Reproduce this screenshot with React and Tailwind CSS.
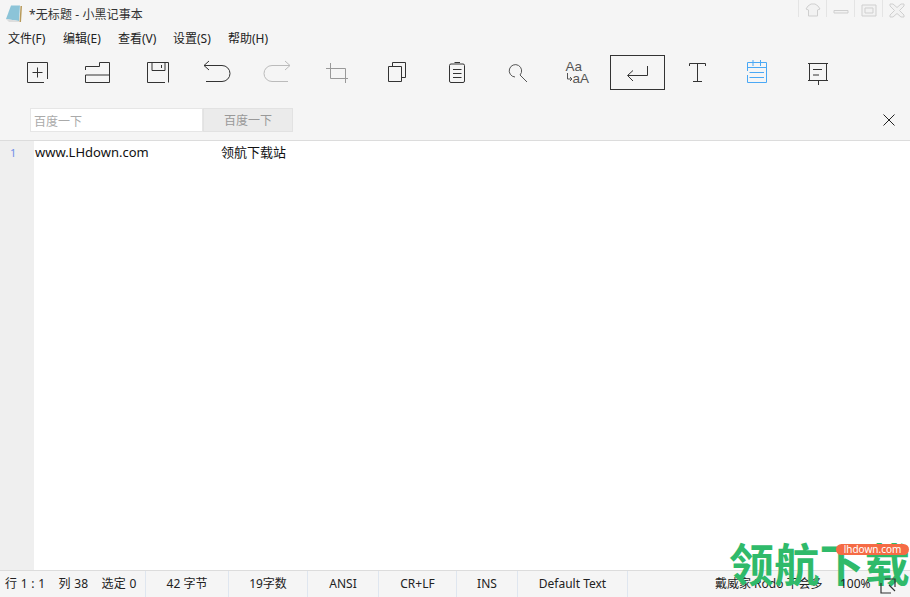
const dark = '#333333';

function Icon({ i, children, stroke = dark }) {
  // paths below use page coordinates, the viewBox shifts them into the button
  const x = 8 + 60 * i;
  return (
    <svg width="60" height="36" viewBox={`${x} 55 60 36`} fill="none" stroke={stroke} strokeWidth="1" className="block">
      {children}
    </svg>
  );
}

const tools = [
  <path key="n" d="M47.5 79V62.5H27.5V82.5H44M37.5 67.5V77.5M32.5 72.5H42.5" />,
  <path key="o" d="M85.5 70V66.5H99.5V62.5H109.5V82.5H85.5V75H109.5" />,
  <path key="s" d="M165 82.5H147.5V62.5H168.5V82.5M152 62.5V70.5H165V62.5M161.5 65V68" />,
  <path key="u" d="M206 81.5H222A8 8 0 0 0 222 65.5H204L209 61M204 65.5L209 70" />,
  <path key="r" d="M288 81.5H272A8 8 0 0 1 272 65.5H290L285 61M290 65.5L285 70" />,
  <path key="c" d="M326 68.5H345.5V83M330.5 63V78.5H348" />,
  <path key="d" d="M392.5 66V62.5H405.5V77.5H401.5M388.5 66.5H401.5V81.5H388.5Z" />,
  <path key="p" d="M451 64H463A1.5 1.5 0 0 1 464.500 65.500V81A1.500 1.500 0 0 1 463 82.500H451A1.500 1.500 0 0 1 449.500 81V65.500A1.500 1.500 0 0 1 451 64ZM454.500 62.500H460M453 69.500H461.500M453 73.500H461.500M453 77.500H461.500" />,
  <path key="f" d="M520 75A6.200 6.200 0 1 0 515 77M520 75L527 82" />,
  null,
  <path key="e" d="M647.500 66V75.500H628M633 70.500L627.500 75.500L633 81" />,
  <path key="t" d="M689.500 66V63.500H705.500V66M697.500 63.500V81.500M693 81.500H702" />,
  <path key="b" d="M747.500 71V62.500H766.500V82.500H747.500V75M747.500 67.500H766.500M753 60V66M760.500 60V66M749.500 72.500H764M749.500 77.500H764" />,
  <path key="m" d="M808 63.500H828M809.500 63.500V80M826.500 63.500V80M808 80.500H828M818.500 80.500V85M813 69.500H822M813 75H819" />,
];

function CaseIcon() {
  return (
    <Icon i={9} stroke="#555555">
      <text x="565.500" y="71" fontFamily="Liberation Sans, sans-serif" fontSize="13.500" fill="#555555" stroke="none">Aa</text>
      <text x="572.500" y="83" fontFamily="Liberation Sans, sans-serif" fontSize="13.500" fill="#555555" stroke="none">aA</text>
      <path d="M567.500 73V79H572M570 77L572 79L570 81" />
    </Icon>
  );
}

const statusCells = [
  { w: 'w-[83px]', text: '42 字节' },
  { w: 'w-[79px]', text: '19字数' },
  { w: 'w-[71px]', text: 'ANSI' },
  { w: 'w-[78px]', text: 'CR+LF' },
  { w: 'w-[61px]', text: 'INS' },
  { w: 'w-[110px]', text: 'Default Text' },
];

export default function App() {
  const colours = { 3: dark, 4: '#bbbbbb', 5: '#999999', 8: '#555555', 12: '#4aa8f5' };

  return (
    <div className="relative w-[910px] h-[597px] overflow-hidden flex flex-col bg-[#f5f5f5] text-[12px] leading-none text-[#222] font-['Noto_Sans','Noto_Sans_CJK_SC',sans-serif]">
      {/* Title bar */}
      <div className="h-[28px] flex items-start shrink-0">
        <svg width="18" height="18" viewBox="0 0 18 18" className="ml-[6px] mt-[5px] shrink-0">
          <path d="M0 14L5 0.500L14 0.500L13 16Z" fill="#8cc4d8" />
          <path d="M14.500 1L16 1L15 17L13.500 17Z" fill="#b89a5a" />
          <path d="M0 14L13 16L13 17L3 17Z" fill="#dddddd" />
        </svg>
        <span className="ml-[5px] mt-[9px] text-[12px] tracking-[0.1px] text-[#333]">*无标题 - 小黑记事本</span>
        <div className="ml-auto flex h-[17px]">
          {[
            <path key="s" d="M3 4L6 2H10L13 4L15 7L12.500 8V14H3.500V8L1 7Z" />,
            <path key="m" d="M1 8.500H15V11H1Z" />,
            <path key="r" d="M1 3H15V14H1ZM4 6H12V11H4Z" />,
            <path key="c" d="M1 2L4 2L8 5.500L12 2H15V4L10.500 8.500L15 13V15H12L8 11.500L4 15H1V13L5.500 8.500L1 4Z" />,
          ].map((d, i) => (
            <div key={i} className="w-[28px] border-l border-[#e4e4e4] flex items-center justify-center pt-[2px]">
              <svg width="16" height="16" viewBox="0 0 16 16" fill="#f2f2f2" stroke="#cfcfcf" strokeWidth="1">{d}</svg>
            </div>
          ))}
        </div>
      </div>

      {/* Menu */}
      <div className="h-[20px] flex items-center pl-[8px] pt-[2px] shrink-0 text-[#222]">
        {['文件(F)', '编辑(E)', '查看(V)', '设置(S)', '帮助(H)'].map((m) => (
          <span key={m} className="w-[55px] whitespace-nowrap">{m}</span>
        ))}
      </div>

      {/* Toolbar */}
      <div className="h-[50px] pt-[7px] pl-[8px] flex items-start shrink-0">
        {tools.map((t, i) =>
          i === 9 ? (
            <CaseIcon key={i} />
          ) : i === 10 ? (
            <div key={i} className="w-[60px] h-[36px] flex">
              <div className="w-[55px] h-[35px] ml-[2px] border border-[#333] overflow-hidden flex justify-center">
                <div className="shrink-0 -mt-px">
                  <Icon i={i}>{t}</Icon>
                </div>
              </div>
            </div>
          ) : (
            <Icon key={i} i={i} stroke={colours[i] || dark}>{t}</Icon>
          )
        )}
      </div>

      {/* Search bar */}
      <div className="h-[43px] flex items-start pt-[10px] pl-[30px] pr-[15px] border-b border-[#dcdcdc] shrink-0">
        <input
          readOnly
          placeholder="百度一下"
          className="w-[173px] h-[24px] bg-white border border-[#e6e6e6] pl-[3px] pt-[2px] text-[12px] outline-none placeholder:text-[#aaa]"
        />
        <button className="w-[90px] h-[24px] pt-[2px] bg-[#ebebeb] border border-[#e2e2e2] text-[#999] text-[12px]">百度一下</button>
        <svg width="12" height="12" viewBox="0 0 12 12" stroke="#222" strokeWidth="1" className="ml-auto mt-[6px]">
          <path d="M0.500 0.500L11.500 11.500M11.500 0.500L0.500 11.500" />
        </svg>
      </div>

      {/* Editor */}
      <div className="flex-1 flex bg-white min-h-0">
        <div className="w-[34px] bg-[#efefef] pl-[10px] pt-[6px] text-[11px] text-[#6f8fe8]">1</div>
        <div className="flex-1 pl-px pt-[4px] text-[13px] leading-[15px] text-[#111] whitespace-pre flex">
          <span className="w-[186px]">www.LHdown.com</span>
          <span>领航下载站</span>
        </div>
      </div>

      {/* Status bar */}
      <div className="h-[27px] flex items-center border-t border-[#dcdcdc] shrink-0 text-[#222]">
        <div className="w-[146px] h-full pl-[5px] flex items-center gap-[13px] border-r border-[#dfe6ef] whitespace-nowrap tracking-[0.3px]">
          <span>行 1 : 1</span>
          <span>列 38</span>
          <span>选定 0</span>
        </div>
        {statusCells.map((c) => (
          <div key={c.text} className={`${c.w} h-full flex items-center justify-center border-r border-[#dfe6ef] whitespace-nowrap`}>
            {c.text}
          </div>
        ))}
        <span className="ml-[87px] w-[125px] whitespace-nowrap">戴威家 Rodo 不会多</span>
        <span className="relative z-10 w-[40px]">100%</span>
        <svg width="16" height="16" viewBox="0 0 16 16" fill="none" stroke="#333" strokeWidth="1.200" className="relative z-10 mt-[4px]">
          <path d="M1 5V15H11M5 1H15V9M9 7L15 13" />
        </svg>
      </div>

      {/* Watermark */}
      <div className="absolute left-[729px] top-[533px] text-[45px] leading-[60px] tracking-[0.25px] font-bold text-[#2fba6a] whitespace-nowrap font-['Noto_Sans_CJK_SC',sans-serif]">
        领航下载
      </div>
      <div className="absolute left-[836px] top-[544px] w-[73px] h-[11px] rounded-[6px] bg-[#f56b45] text-white text-[10px] leading-[11px] text-center">
        lhdown.com
      </div>
    </div>
  );
}
